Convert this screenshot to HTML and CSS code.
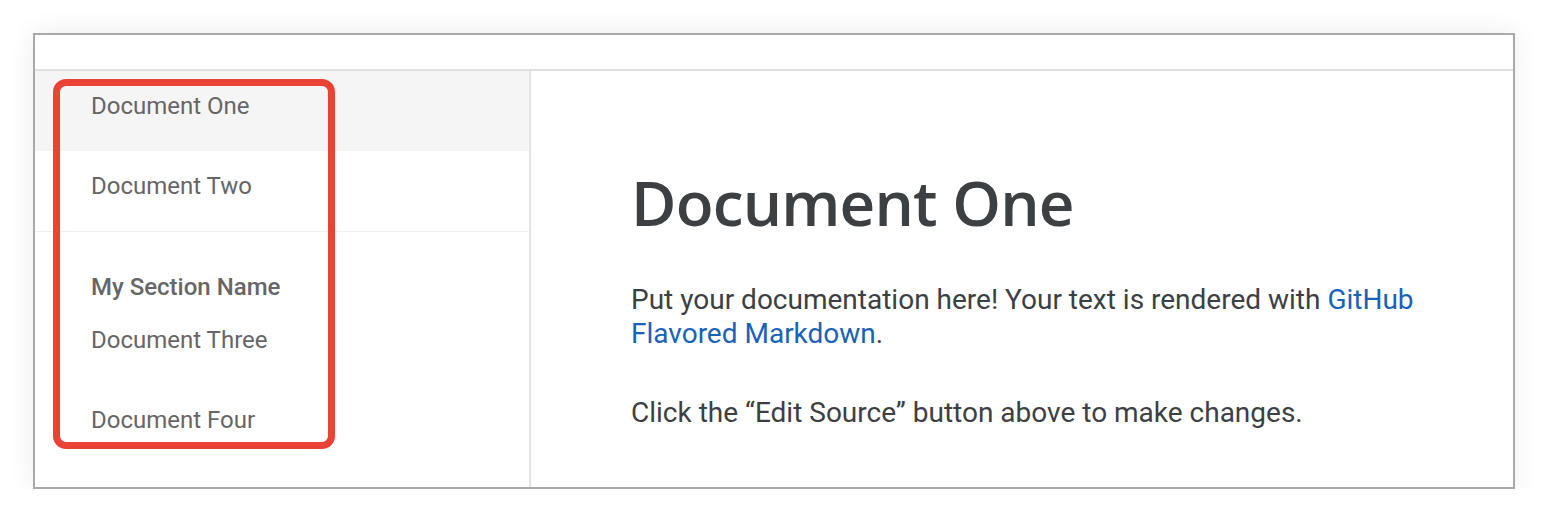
FILE: index.html
```html
<!DOCTYPE html>
<html lang="en">
<head>
  <meta charset="UTF-8" />
  <title>Documents</title>
  <link rel="stylesheet" href="styles.css">
</head>
<body>
  <div class="frame">
    <div class="topbar"></div>
    <div class="layout">
      <nav class="sidebar">
        <div class="group">
          <a class="item active">Document One</a>
          <a class="item">Document Two</a>
        </div>
        <div class="group section">
          <div class="section-title">My Section Name</div>
          <a class="item">Document Three</a>
          <a class="item">Document Four</a>
        </div>
        <div class="highlight"></div>
      </nav>
      <main class="content">
        <h1>Document One</h1>
        <p>Put your documentation here! Your text is rendered with <a href="#">GitHub Flavored Markdown</a>.</p>
        <p>Click the &ldquo;Edit Source&rdquo; button above to make changes.</p>
      </main>
    </div>
  </div>
</body>
</html>
```

FILE: styles.css
```css
body {
  margin: 0;
  padding: 33px 33px 0 33px;
  background: #fff;
  font-family: Roboto, "Liberation Sans", sans-serif;
}

.frame {
  width: 1482px;
  height: 456px;
  box-sizing: border-box;
  border: 2px solid #a9a9ac;
  background: #fff;
  box-shadow: 0 0 24px rgba(0,0,0,0.08);
  display: flex;
  flex-direction: column;
}

.topbar {
  height: 34px;
  border-bottom: 2px solid #dfe1e5;
}

.layout {
  flex: 1;
  display: flex;
}

.sidebar {
  position: relative;
  width: 494px;
  border-right: 2px solid #e3e3e3;
}

.group {
  border-bottom: 1px solid #f0f0f0;
}

.group.section {
  border-bottom: none;
  padding-top: 43px;
}

.item {
  display: block;
  height: 80px;
  box-sizing: border-box;
  padding: 23px 56px 0;
  line-height: 24px;
  font-size: 24px;
  color: #666;
}

.item.active {
  background: #f5f5f5;
}

.section-title {
  padding: 0 56px;
  line-height: 24px;
  font-size: 24px;
  font-weight: 500;
  color: #666;
  margin-bottom: 6px;
}

.highlight {
  position: absolute;
  left: 18px;
  top: 8px;
  width: 282px;
  height: 370px;
  box-sizing: border-box;
  border: 7px solid #ea4335;
  border-radius: 13px;
}

.content {
  flex: 1;
  padding: 0 40px 0 100px;
}

h1 {
  margin: 93px 0 0;
  font-family: "Open Sans", Roboto, sans-serif;
  font-weight: 600;
  font-size: 62px;
  letter-spacing: -0.8px;
  line-height: 76px;
  color: #3c4043;
}

p {
  margin: 0;
  font-size: 28px;
  line-height: 34px;
  color: #3c4043;
  max-width: 800px;
}

h1 + p {
  margin-top: 43px;
}

p + p {
  margin-top: 45px;
}

p a {
  color: #1a62b8;
  text-decoration: none;
}
```
